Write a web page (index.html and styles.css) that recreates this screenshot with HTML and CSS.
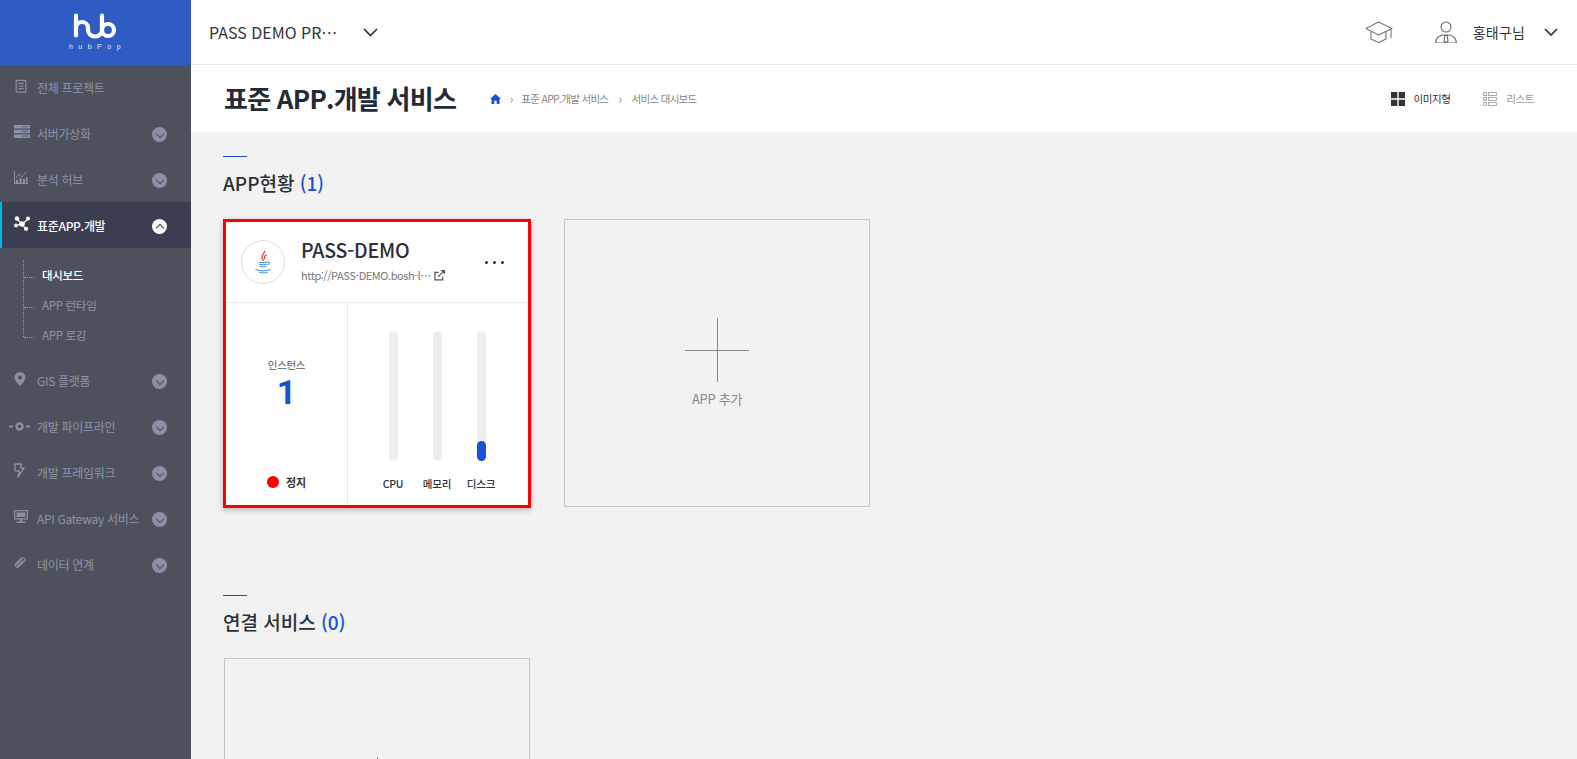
FILE: index.html
```html
<!DOCTYPE html>
<html lang="ko">
<head>
<meta charset="utf-8">
<title>표준 APP.개발 서비스</title>
<link rel="stylesheet" href="styles.css">
</head>
<body>
<div class="app">
  <aside class="sidebar">
    <div class="logo">
      <svg class="logo-mark" viewBox="0 0 44 26" width="44" height="26"><g fill="none" stroke="#fff" stroke-width="4.200" stroke-linecap="round" stroke-linejoin="round"><path d="M3 2.500V22.500"/><path d="M3 15c0-4 3-6 6-6s6 2 6 6v2c0 3.500 3 6.500 7 6.500s7-3 7-6.500"/><path d="M29 2.500V17"/><circle cx="35" cy="17" r="6"/></g></svg>
      <div class="logo-text">hubPop</div>
    </div>
    <nav class="menu">
      <a class="menu-item first"><span class="mi"><svg viewBox="0 0 16 16" width="14" height="16"><g fill="none" stroke="#8a90a5" stroke-width="1.400"><rect x="2.500" y="1.500" width="11" height="13.500" rx="1"/><path d="M5 5h6M5 8h6M5 11h6"/></g></svg></span><span class="ml">전체 프로젝트</span></a>
      <a class="menu-item"><span class="mi"><svg viewBox="0 0 16 13" width="16" height="13"><path fill="#8a90a5" d="M0 0h16v3.500H0zM0 4.700h16v3.500H0zM0 9.400h16v3.500H0z"/><path stroke="#4d515e" stroke-width=".7" d="M8 1.700h6M8 6.400h6M8 11.100h6"/></svg></span><span class="ml">서버가상화</span><i class="chev"></i></a>
      <a class="menu-item"><span class="mi"><svg viewBox="0 0 14 13" width="14" height="13"><path fill="none" stroke="#8a90a5" stroke-width="1" d="M.5 0v12.500H14M2 7l3-4 3 3 4-5"/><path fill="#8a90a5" d="M2 9h2v3H2zM5.500 7h2v5h-2zM9 8h2v4H9zM12 6h1.500v6H12z"/></svg></span><span class="ml">분석 허브</span><i class="chev"></i></a>
      <a class="menu-item active"><span class="mi"><svg viewBox="0 0 16 15" width="16" height="15"><g stroke="#fff" stroke-width="1.100"><path d="M8 8 3 3M8 8l6-5M8 8l-6 1.500M8 8l4 5.500"/></g><g fill="#fff"><circle cx="8" cy="8" r="2.800"/><circle cx="3" cy="2.500" r="2.200"/><circle cx="14" cy="2.500" r="2"/><circle cx="2" cy="9.500" r="2"/><circle cx="12" cy="12.800" r="2.100"/></g></svg></span><span class="ml">표준APP.개발</span><i class="chev up"></i></a>
      <div class="submenu">
        <a class="sub-item on">대시보드</a>
        <a class="sub-item">APP 런타임</a>
        <a class="sub-item">APP 로깅</a>
      </div>
      <a class="menu-item"><span class="mi"><svg viewBox="0 0 12 14" width="12" height="14"><path fill-rule="evenodd" fill="#8a90a5" d="M6 0a5.500 5.500 0 0 0-5.500 5.500C.5 9 6 14 6 14s5.500-5 5.500-8.500A5.500 5.500 0 0 0 6 0zm0 3.500a2 2 0 1 1 0 4 2 2 0 0 1 0-4z"/></svg></span><span class="ml">GIS 플랫폼</span><i class="chev"></i></a>
      <a class="menu-item"><span class="mi mi-wide"><svg viewBox="0 0 21 9" width="21" height="9"><path fill="#8a90a5" d="M0 3.500h4v2H0zM17 3.500h4v2h-4z"/><circle cx="10.500" cy="4.500" r="3" fill="none" stroke="#8a90a5" stroke-width="2.400"/></svg></span><span class="ml">개발 파이프라인</span><i class="chev"></i></a>
      <a class="menu-item"><span class="mi"><svg viewBox="0 0 11 15" width="11" height="15"><path fill="none" stroke="#8a90a5" stroke-width="1.400" stroke-linejoin="round" d="M1 1h6.500L6.500 5H10L4 14l1.300-6H3.500L1 7.500z"/></svg></span><span class="ml">개발 프레임워크</span><i class="chev"></i></a>
      <a class="menu-item"><span class="mi"><svg viewBox="0 0 14 13" width="14" height="13"><path fill="none" stroke="#8a90a5" stroke-width="1.200" d="M.6.600h12.800v8.300H.6z"/><path fill="#8a90a5" d="M2.500 2.500h9v4.500h-9zM6 9h2v2.500H6zM2.500 11.500h9V13h-9z"/></svg></span><span class="ml">API Gateway 서비스</span><i class="chev"></i></a>
      <a class="menu-item"><span class="mi"><svg viewBox="0 0 13 12" width="13" height="12"><g fill="none" stroke="#8a90a5" stroke-width="1.100" stroke-linecap="round"><path d="M7.500 2 2 7.500a1.800 1.800 0 0 0 2.500 2.500l6.500-6.500A2.500 2.500 0 0 0 7.500 1L1 7.500"/><path d="M8.500 4 3.500 9"/></g></svg></span><span class="ml">데이터 연계</span><i class="chev"></i></a>
    </nav>
  </aside>
  <div class="main">
    <header class="topbar">
      <div class="project"><span class="project-name">PASS DEMO PR…</span><svg class="caret" viewBox="0 0 15 9" width="15" height="9"><path fill="none" stroke="#333" stroke-width="1.700" d="M1 1l6.500 6.500L14 1"/></svg></div>
      <div class="top-right">
        <svg class="cap" viewBox="0 0 28 22" width="28" height="22"><g fill="none" stroke="#777" stroke-width="1.100" stroke-linejoin="round"><path d="M1 7.500 13.500 1 27 7.500 13.500 14z"/><path d="M6 10.500V18l7.500 3.500L21 18v-7.500"/><path d="M26 8v9"/></g></svg>
        <svg class="user" viewBox="0 0 22 22" width="22" height="22"><g fill="none" stroke="#666" stroke-width="1.100"><circle cx="11" cy="6" r="5"/><path d="M.6 22c0-5 3-7 7-8h6.800c4 1 7 3 7 8z"/><path d="M9.800 14.500h2.400L13 20l-2 2-2-2z"/></g></svg>
        <span class="user-name">홍태구님</span>
        <svg viewBox="0 0 14 8" width="14" height="8"><path fill="none" stroke="#333" stroke-width="1.700" d="M1 1l6 6 6-6"/></svg>
      </div>
    </header>
    <div class="titlebar">
      <h1 class="page-title">표준 APP.개발 서비스</h1>
      <div class="crumbs">
        <svg viewBox="0 0 11 10" width="11" height="10"><path fill="#1a4fd8" d="M5.500 0 11 5H9.500v5H6.700V6.800H4.300V10H1.500V5H0z"/></svg>
        <span class="sep">›</span><span>표준 APP.개발 서비스</span><span class="sep sep-wide">›</span><span>서비스 대시보드</span>
      </div>
      <div class="views">
        <a class="view on"><svg viewBox="0 0 14 14" width="14" height="14"><path fill="#333" d="M0 0h6.300v6.300H0zM7.700 0H14v6.300H7.700zM0 7.700h6.300V14H0zM7.700 7.700H14V14H7.700z"/></svg>이미지형</a>
        <a class="view"><svg viewBox="0 0 14 14" width="14" height="14"><g fill="none" stroke="#aaa"><path d="M.5.500h3v3h-3zM.5 5.500h3v3h-3zM.5 10.500h3v3h-3zM5.500.500h8v3h-8zM5.500 5.500h8v3h-8zM5.500 10.500h8v3h-8z"/></g></svg>리스트</a>
      </div>
    </div>
    <main class="content">
      <section class="section">
        <div class="rule"></div>
        <h2 class="section-title">APP현황 <b>(1)</b></h2>
        <div class="cards">
          <article class="card">
            <div class="card-head">
              <div class="avatar"><svg viewBox="0 0 24 32" width="18" height="24"><g fill="none"><path stroke="#e2473c" stroke-width="1.800" d="M14 1c1 4-5 6-3 10 .6 1.400 1.500 2.500 1.500 3.500M17 6c-3 2-4 3.500-2.500 6"/><g stroke="#4f93d2" stroke-width="1.500"><path d="M6 16c4 1 9 1 12 0M7 19c3 .8 7 .8 10 0M8 22c3 .6 6 .6 8 0M18 16c3-.5 4 2 0 4"/><path d="M2 26c5 2.500 15 2.500 20 0M7 30c4 .8 8 .8 11 0"/></g></g></svg></div>
              <div class="card-info">
                <div class="card-name">PASS-DEMO</div>
                <div class="card-url"><span class="url-text">http://PASS-DEMO.bosh-l…</span><svg viewBox="0 0 12 12" width="11" height="11"><g fill="none" stroke="#555" stroke-width="1.300"><path d="M9.500 7v3.800H1V2.500h4"/><path d="M4.500 7.500 11 1"/></g><path fill="#555" d="M7 0h5v5z"/></svg></div>
              </div>
              <div class="more"><i></i><i></i><i></i></div>
            </div>
            <div class="card-body">
              <div class="inst">
                <div class="inst-top"><div class="inst-label">인스턴스</div><div class="inst-num">1</div></div>
                <div class="status"><i class="dot"></i>정지</div>
              </div>
              <div class="meters">
                <div class="meter"><div class="track"></div><div class="meter-label">CPU</div></div>
                <div class="meter"><div class="track"></div><div class="meter-label">메모리</div></div>
                <div class="meter"><div class="track"><div class="fill" style="height:20px"></div></div><div class="meter-label">디스크</div></div>
              </div>
            </div>
          </article>
          <div class="add-card"><div class="plus"></div><div class="add-label">APP 추가</div></div>
        </div>
      </section>
      <section class="section section-two">
        <div class="rule"></div>
        <h2 class="section-title">연결 서비스 <b>(0)</b></h2>
        <div class="cards cards-two">
          <div class="add-card"><div class="plus"></div></div>
        </div>
      </section>
    </main>
  </div>
</div>
</body>
</html>
```

FILE: styles.css
```css
* { box-sizing: border-box; margin: 0; padding: 0; }
html, body { height: 100%; overflow: hidden; }
body { font-family: "Noto Sans CJK KR", "Noto Sans", sans-serif; color: #222; background: #f2f2f2; }
.app { display: flex; height: 759px; overflow: hidden; }

.sidebar { width: 191px; flex: none; background: #4d515e; }
.logo { height: 65px; background: #2f5bc4; display: flex; flex-direction: column; align-items: center; padding-top: 13px; }
.logo-mark { display: block; margin-left: -2px; }
.logo-text { font: 7px/8px "Liberation Sans", sans-serif; color: #e8edfa; letter-spacing: 5.500px; margin-top: 4px; padding-left: 4px; }

.menu-item { height: 46px; display: flex; align-items: center; padding-left: 14px; padding-right: 24px; font-size: 12px; color: #8f95ab; letter-spacing: -.3px; position: relative; }
.menu-item.first { height: 45px; }
.mi { width: 23px; flex: none; display: flex; align-items: center; }
.mi svg { display: block; margin-top: -3px; }
.mi-wide svg { margin-left: -5px; margin-top: 0; }
.ml { flex: 1; white-space: nowrap; margin-top: 1px; }
.first .ml { margin-top: -1px; }
.chev { width: 15px; height: 15px; flex: none; border-radius: 50%; background: #8a90a5; position: relative; margin-top: 2px; }
.chev::after { content: ""; position: absolute; left: 5px; top: 4px; width: 5px; height: 5px; border: solid #4d515e; border-width: 0 1.500px 1.500px 0; transform: rotate(45deg); }
.chev.up { background: #fff; }
.chev.up::after { border-color: #3b3e50; top: 6px; transform: rotate(225deg); }
.menu-item.active { background: #3b3e50; color: #fff; font-weight: 500; border-left: 2px solid #00b4f0; padding-left: 12px; }

.submenu { height: 109px; padding: 12px 0 0 42px; position: relative; }
.submenu::before { content: ""; position: absolute; left: 23px; top: 12px; height: 77px; border-left: 1px dotted #9a9fb0; }
.sub-item { display: block; height: 30px; line-height: 30px; font-size: 11.500px; color: #8f95ab; letter-spacing: -.3px; position: relative; }
.sub-item::before { content: ""; position: absolute; left: -18px; top: 17px; width: 10px; border-top: 1px dotted #9a9fb0; }
.sub-item.on { color: #fff; font-weight: 500; }

.main { flex: 1; min-width: 0; display: flex; flex-direction: column; }
.topbar { height: 65px; flex: none; background: #fff; border-bottom: 1px solid #eaeaea; display: flex; align-items: center; justify-content: space-between; padding: 0 19px 0 18px; }
.project { display: flex; align-items: center; }
.project-name { width: 130px; font-size: 16px; color: #333; white-space: nowrap; }
.caret { margin-left: 24px; }
.top-right { display: flex; align-items: center; font-size: 14px; }
.user { margin-left: 42px; }
.user-name { margin: 0 19px 0 16px; color: #333; letter-spacing: .2px; }

.titlebar { height: 67px; flex: none; background: #fff; display: flex; align-items: center; padding: 0 43px 0 33px; }
.page-title { font-size: 26px; font-weight: 700; color: #222b36; letter-spacing: -.75px; white-space: nowrap; line-height: 36px; margin-top: -1px; }
.crumbs { display: flex; align-items: center; margin-left: 34px; font-size: 10.500px; color: #888; letter-spacing: -.7px; white-space: nowrap; }
.sep { margin: 0 8.500px; font-size: 13px; color: #999; }
.sep-wide { margin: 0 10px; }
.views { margin-left: auto; display: flex; gap: 33px; }
.view { display: flex; align-items: center; gap: 9px; font-size: 10.500px; color: #999; letter-spacing: -.45px; }
.view.on { color: #333; }

.content { flex: 1; padding-left: 32px; overflow: hidden; }
.section { padding-top: 24px; }
.section-two { padding-top: 87px; }
.rule { width: 24px; height: 1px; background: #1a4fd8; }
.section-title { font-size: 19px; font-weight: 500; color: #2a2f38; line-height: 26px; margin-top: 13px; }
.section-title b { font-weight: 500; color: #1a4fd8; }
.cards { display: flex; gap: 33px; margin-top: 23px; }
.cards-two { padding-left: 1px; }

.card { width: 308px; height: 289px; background: #fff; border: 3px solid #f00; box-shadow: 0 2px 6px rgba(0,0,0,.25); display: flex; flex-direction: column; }
.card-head { height: 81px; flex: none; border-bottom: 1px solid #eaeaea; display: flex; align-items: center; padding-left: 15px; }
.avatar { width: 44px; height: 44px; flex: none; border: 1px solid #ddd; border-radius: 50%; display: flex; align-items: center; justify-content: center; }
.card-info { margin-left: 16px; width: 160px; margin-top: -4px; }
.card-name { font-size: 19.500px; font-weight: 500; color: #2a2f38; line-height: 28px; letter-spacing: -.2px; }
.card-url { display: flex; align-items: center; gap: 5px; font-size: 11px; color: #777; line-height: 18px; margin-top: 2px; }
.url-text { width: 128px; white-space: nowrap; letter-spacing: -.45px; }
.more { display: flex; gap: 5px; margin-left: 24px; }
.more i { width: 3px; height: 3px; border-radius: 50%; background: #333; }
.card-body { flex: 1; display: flex; min-height: 0; }
.inst { width: 122px; flex: none; border-right: 1px solid #eaeaea; display: flex; flex-direction: column; align-items: center; justify-content: space-between; padding: 54px 0 14px; }
.inst-top { text-align: center; }
.inst-label { font-size: 10.500px; font-weight: 500; color: #777; line-height: 16px; letter-spacing: -.3px; }
.inst-num { font-family: Roboto, sans-serif; font-size: 34px; font-weight: 700; color: #1a4fd8; line-height: 36px; margin-top: 1px; }
.status { display: flex; align-items: center; gap: 7px; font-size: 11px; font-weight: 700; color: #333; line-height: 18px; }
.dot { width: 12px; height: 12px; border-radius: 50%; background: #f00; }
.meters { flex: 1; display: flex; padding: 28px 0 0 30px; gap: 14px; }
.meter { width: 30px; display: flex; flex-direction: column; align-items: center; }
.track { width: 9px; height: 130px; border-radius: 5px; background: #eee; display: flex; align-items: flex-end; }
.fill { width: 9px; border-radius: 5px; background: #1a4fd8; }
.meter-label { font-size: 10.500px; font-weight: 500; color: #333; line-height: 16px; margin-top: 15px; white-space: nowrap; letter-spacing: -.2px; }

.add-card { width: 306px; height: 288px; flex: none; border: 1px solid #c6c6c6; display: flex; flex-direction: column; align-items: center; padding-top: 98px; }
.plus { width: 64px; height: 64px; background: linear-gradient(#888,#888) center/64px 1px no-repeat, linear-gradient(#888,#888) center/1px 64px no-repeat; }
.add-label { font-size: 13px; color: #888; line-height: 18px; margin-top: 8px; letter-spacing: -.3px; }
```
